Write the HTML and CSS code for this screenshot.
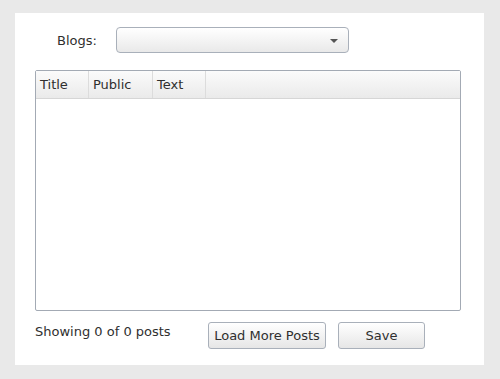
FILE: index.html
```html
<!DOCTYPE html>
<html lang="en">
<head>
  <meta charset="UTF-8">
  <title>Blog Posts</title>
  <link rel="stylesheet" href="styles.css">
</head>
<body>
  <div class="panel">
    <div class="blogs-row">
      <label class="blogs-label">Blogs:</label>
      <div class="combo">
        <span class="combo-arrow"></span>
      </div>
    </div>

    <div class="grid">
      <div class="grid-header">
        <div class="col col-title">Title</div>
        <div class="col col-public">Public</div>
        <div class="col col-text">Text</div>
        <div class="col col-fill"></div>
      </div>
      <div class="grid-body"></div>
    </div>

    <div class="footer">
      <span class="status">Showing 0 of 0 posts</span>
      <button class="btn btn-load">Load More Posts</button>
      <button class="btn btn-save">Save</button>
    </div>
  </div>
</body>
</html>
```

FILE: styles.css
```css
body {
  margin: 0;
  background: #e9e9e9;
  font-family: "DejaVu Sans", Verdana, sans-serif;
  font-size: 13px;
  color: #2f2f2f;
}

.panel {
  margin: 13px 16px 0 15px;
  width: 469px;
  height: 352px;
  background: #fff;
  padding-left: 20px;
  box-sizing: border-box;
  display: flex;
  flex-direction: column;
}

.blogs-row {
  display: flex;
  align-items: center;
  padding-top: 14px;
}

.blogs-label {
  margin-left: 22px;
  width: 59px;
}

.combo {
  position: relative;
  width: 233px;
  height: 26px;
  box-sizing: border-box;
  border: 1px solid #a9b0ba;
  border-radius: 4px;
  background: linear-gradient(#ffffff, #e9e9e9);
}

.combo-arrow {
  position: absolute;
  right: 10px;
  top: 11px;
  border-left: 4px solid transparent;
  border-right: 4px solid transparent;
  border-top: 4px solid #555;
}

.grid {
  margin-top: 17px;
  width: 426px;
  height: 241px;
  box-sizing: border-box;
  border: 1px solid #a3aab4;
  border-radius: 2px;
  display: flex;
  flex-direction: column;
}

.grid-header {
  display: flex;
  height: 28px;
  box-sizing: border-box;
  border-bottom: 1px solid #d6d6d6;
  background: linear-gradient(#fbfbfb, #eaeaea);
}

.col {
  box-sizing: border-box;
  border-right: 1px solid #dcdcdc;
  padding-left: 4px;
  line-height: 28px;
}

.col-title { width: 53px; }
.col-public { width: 64px; }
.col-text { width: 53px; }
.col-fill { flex: 1; border-right: none; }

.grid-body {
  flex: 1;
}

.footer {
  display: flex;
  align-items: center;
  margin-top: 11px;
}

.status {
  width: 173px;
  margin-top: -8px;
}

.btn {
  height: 27px;
  box-sizing: border-box;
  border: 1px solid #a9b0ba;
  border-radius: 3px;
  background: linear-gradient(#ffffff, #e6e6e6);
  font-family: "DejaVu Sans", Verdana, sans-serif;
  font-size: 13px;
  color: #2f2f2f;
  padding: 0;
}

.btn-load { width: 118px; }
.btn-save { width: 87px; margin-left: 12px; }
```
